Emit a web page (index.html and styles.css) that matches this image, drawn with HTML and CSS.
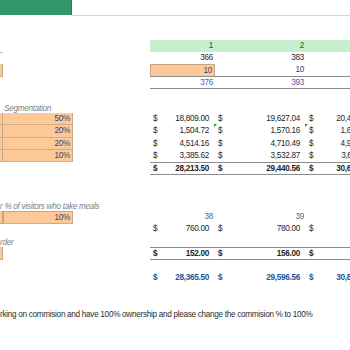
FILE: index.html
```html
<!DOCTYPE html>
<html>
<head>
<meta charset="utf-8">
<link rel="stylesheet" href="styles.css">
</head>
<body>
<div class="sheet">
  <div class="title">
    <div class="title-fill"></div>
    <div class="title-rest"></div>
  </div>
  <div class="gap g24"></div>

  <div class="row">
    <div></div><div></div><div></div>
    <div class="hdr num">1</div><div class="hdr num">2</div><div class="hdr"></div>
  </div>
  <div class="row">
    <div class="tick"></div><div></div><div></div>
    <div class="num">366</div><div class="num">383</div><div></div>
  </div>
  <div class="row">
    <div class="input"></div><div></div><div></div>
    <div class="input num calc">10</div><div class="num calc">10</div><div></div>
  </div>
  <div class="row">
    <div></div><div></div><div></div>
    <div class="num sum lilac">376</div><div class="num sum lilac">393</div><div class="sum"></div>
  </div>

  <div class="gap g13"></div>
  <div class="row">
    <div></div><div class="label pad">Segmentation</div><div></div>
    <div></div><div></div><div></div>
  </div>
  <div class="row seg">
    <div class="input"></div><div class="input num calc">50%</div><div></div>
    <div class="acc"><span>$</span><span>18,809.00</span></div>
    <div class="acc"><span>$</span><span>19,627.04</span></div>
    <div class="acc"><span>$</span><span>20,445.09</span></div>
  </div>
  <div class="row seg">
    <div class="input"></div><div class="input num calc">20%</div><div></div>
    <div class="acc"><span>$</span><span>1,504.72</span></div>
    <div class="acc err"><span>$</span><span>1,570.16</span></div>
    <div class="acc err"><span>$</span><span>1,635.61</span></div>
  </div>
  <div class="row seg">
    <div class="input"></div><div class="input num calc">20%</div><div></div>
    <div class="acc"><span>$</span><span>4,514.16</span></div>
    <div class="acc"><span>$</span><span>4,710.49</span></div>
    <div class="acc"><span>$</span><span>4,906.82</span></div>
  </div>
  <div class="row seg">
    <div class="input"></div><div class="input num calc">10%</div><div></div>
    <div class="acc"><span>$</span><span>3,385.62</span></div>
    <div class="acc"><span>$</span><span>3,532.87</span></div>
    <div class="acc"><span>$</span><span>3,680.11</span></div>
  </div>
  <div class="row">
    <div></div><div></div><div></div>
    <div class="acc sum bold"><span>$</span><span>28,213.50</span></div>
    <div class="acc sum bold"><span>$</span><span>29,440.56</span></div>
    <div class="acc sum bold"><span>$</span><span>30,667.63</span></div>
  </div>

  <div class="gap g25"></div>
  <div class="row">
    <div class="label span3">r % of visitors who take meals</div>
    <div></div><div></div><div></div>
  </div>
  <div class="row">
    <div class="input"></div><div class="input num calc">10%</div><div></div>
    <div class="num lilac">38</div><div class="num lilac">39</div><div></div>
  </div>
  <div class="row">
    <div></div><div></div><div></div>
    <div class="acc"><span>$</span><span>760.00</span></div>
    <div class="acc"><span>$</span><span>780.00</span></div>
    <div class="acc"><span>$</span><span></span></div>
  </div>
  <div class="row">
    <div class="label span3">rder</div>
    <div></div><div></div><div></div>
  </div>
  <div class="row">
    <div class="input"></div><div></div><div></div>
    <div class="acc sum bold"><span>$</span><span>152.00</span></div>
    <div class="acc sum bold"><span>$</span><span>156.00</span></div>
    <div class="acc sum bold"><span>$</span><span></span></div>
  </div>

  <div class="gap g13"></div>
  <div class="row">
    <div></div><div></div><div></div>
    <div class="acc bold blue"><span>$</span><span>28,365.50</span></div>
    <div class="acc bold blue"><span>$</span><span>29,596.56</span></div>
    <div class="acc bold blue"><span>$</span><span>30,831.63</span></div>
  </div>

  <div class="gap g25"></div>
  <div class="row">
    <div class="note">rking on commision and have 100% ownership and please change the commision % to 100%</div>
  </div>
</div>
</body>
</html>
```

FILE: styles.css
```css
html, body {
  margin: 0;
  padding: 0;
  background: #ffffff;
}

body {
  width: 350px;
  height: 350px;
  overflow: hidden;
  font-family: "Liberation Sans", Arial, sans-serif;
  font-size: 8.2px;
  letter-spacing: -0.3px;
  color: #262626;
}

.sheet {
  width: 376px;
}

.title {
  display: flex;
  height: 16px;
}

.title-fill {
  width: 71px;
  height: 15px;
  background: #33976a;
  border-right: 1px solid #2b7f59;
}

.title-rest {
  flex: 1;
  height: 15px;
  border-bottom: 1px solid #d2d2d2;
}

.gap.g24 { height: 24px; }
.gap.g13 { height: 13px; }
.gap.g25 { height: 25px; }

.row {
  display: grid;
  grid-template-columns: 3px 70px 77px 65px 91px 70px;
  height: 12px;
}

.row.seg {
  height: 12.25px;
}

.row > div {
  box-sizing: border-box;
  line-height: 11px;
  white-space: nowrap;
  position: relative;
}

.num {
  text-align: right;
  padding-right: 2px;
}

.hdr {
  background: #c6efce;
  color: #0f6a1f;
}

.tick {
  border-top: 1px solid #b8b8b8;
}

.input {
  background: #fdc998;
  border-right: 1px solid #c7a583;
  border-bottom: 1px solid #d2ac86;
}

.row > .input.num {
  border-top: 1px solid #c7a583;
  border-left: 1px solid #c7a583;
}

.seg > .input.num {
  border-top: none;
  border-left: none;
}

.calc {
  color: #3f3f76;
}

.lilac {
  color: #5a5a9c;
}

.sum {
  border-top: 1px solid #8c8c8c;
  border-bottom: 1px solid #8c8c8c;
}

.acc {
  display: flex;
  justify-content: space-between;
  padding: 0 6px 0 3px;
}

.bold {
  font-weight: bold;
}

.blue {
  color: #1f559b;
}

.row > .label {
  font-style: italic;
  color: #7f7f7f;
  line-height: 15px;
}

.pad {
  padding-left: 1px;
}

.span3 {
  grid-column: 1 / span 3;
}

.note {
  grid-column: 1 / span 6;
  color: #2e2e2e;
}

.err::before {
  content: "";
  position: absolute;
  left: -1px;
  top: -1px;
  border-top: 3px solid #1f8a2a;
  border-right: 3px solid transparent;
}
```
